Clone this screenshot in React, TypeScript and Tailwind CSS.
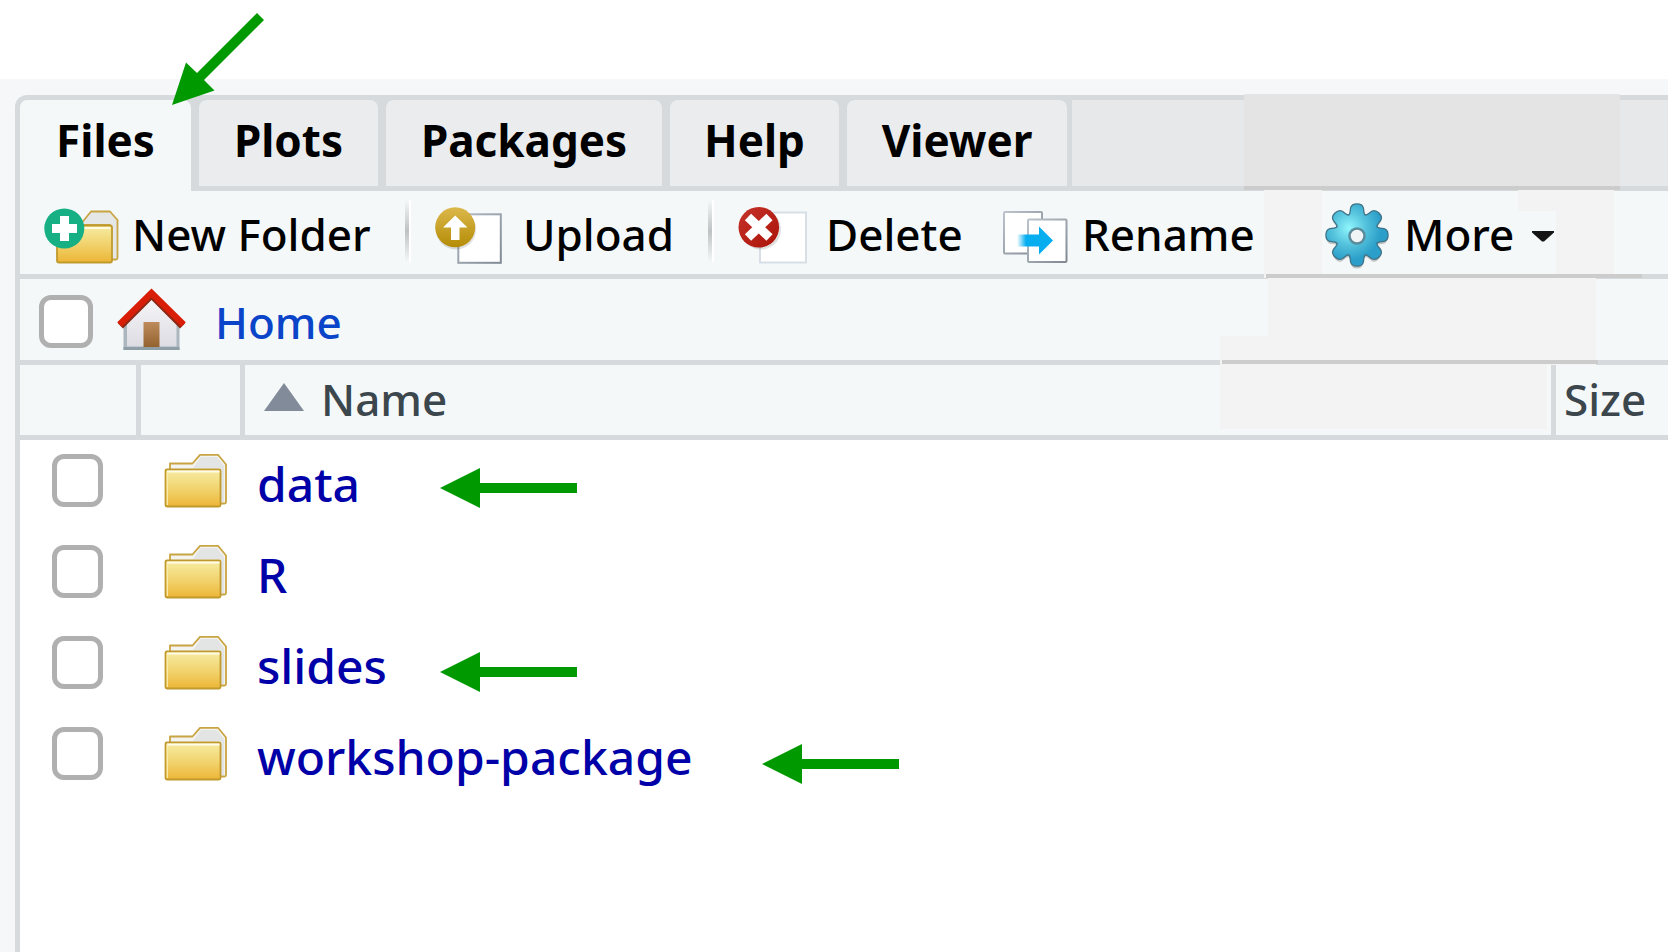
import { useState } from "react";
import type { ReactNode } from "react";
import clsx from "clsx";

type Tab = { name: string; width: string };

const tabs: Tab[] = [
  { name: "Files", width: "w-[171px]" },
  { name: "Plots", width: "w-[179px]" },
  { name: "Packages", width: "w-[276px]" },
  { name: "Help", width: "w-[169px]" },
  { name: "Viewer", width: "w-[220px]" },
];

const folders = ["data", "R", "slides", "workshop-package"];

const NewFolderIcon = () => (
  <svg viewBox="44 206 78 58" className="h-[58px] w-[78px]" aria-hidden="true">
    <defs>
      <linearGradient id="nfFront" x1="0" y1="0" x2="0" y2="1">
        <stop offset="0" stopColor="#f6eda4" />
        <stop offset="0.6" stopColor="#f0cd62" />
        <stop offset="1" stopColor="#ecb535" />
      </linearGradient>
    </defs>
    <path
      d="M80 224 L91 210.500 H110 L117.500 219 V257 Q117.500 258.500 116 258.500 H110 V224 Z"
      fill="#e5e6e6"
      stroke="#c9a443"
      strokeWidth="1.800"
      strokeLinejoin="round"
    />
    <rect x="57" y="224.500" width="55" height="37" rx="2" fill="url(#nfFront)" stroke="#c09a2c" strokeWidth="1.800" />
    <path d="M59 227 H110" stroke="#fffbe0" strokeWidth="2" />
    <circle cx="64.300" cy="227.500" r="20" fill="#17b084" />
    <path d="M52 227.500 H77 M64.500 215 V240" stroke="#fff" strokeWidth="9" />
  </svg>
);

const FolderIcon = () => (
  <svg viewBox="164 453 64 56" className="block h-14 w-16" aria-hidden="true">
    <defs>
      <linearGradient id="rowFront" x1="0" y1="0" x2="0" y2="1">
        <stop offset="0" stopColor="#f6eda4" />
        <stop offset="0.600" stopColor="#f1cf66" />
        <stop offset="1" stopColor="#edb636" />
      </linearGradient>
    </defs>
    <path
      d="M170 470 V463.500 H192.500 L200 454.800 H218 L226 464.500 V502 Q226 503.500 224.500 503.500 H219 V470 Z"
      fill="#f3f3f0"
      stroke="#c9a443"
      strokeWidth="1.800"
      strokeLinejoin="round"
    />
    <path d="M193 468 L201 457 H217 L224 466 V502 H220 V468 Z" fill="#e3e4e4" />
    <rect x="165.500" y="469.500" width="55" height="37" rx="1.500" fill="url(#rowFront)" stroke="#c09a2c" strokeWidth="1.800" />
    <path d="M167 471.500 H219.500" stroke="#fffbe8" strokeWidth="2" />
    <path d="M167.300 472 V505" stroke="#fbeeb0" strokeWidth="1.200" />
  </svg>
);

const UploadIcon = () => (
  <svg viewBox="434 206 70 60" className="h-[60px] w-[70px]" aria-hidden="true">
    <defs>
      <linearGradient id="upFill" x1="0" y1="0" x2="0" y2="1">
        <stop offset="0" stopColor="#dcb84b" />
        <stop offset="1" stopColor="#b48c06" />
      </linearGradient>
      <linearGradient id="pageEdge" x1="0" y1="0" x2="1" y2="1">
        <stop offset="0" stopColor="#b4bcc6" />
        <stop offset="1" stopColor="#808a94" />
      </linearGradient>
    </defs>
    <rect x="458.300" y="214.300" width="42.500" height="48.500" fill="#fff" stroke="url(#pageEdge)" strokeWidth="2" />
    <circle cx="456" cy="229.500" r="20" fill="#000" opacity="0.120" />
    <circle cx="455.200" cy="227.300" r="20" fill="url(#upFill)" />
    <path d="M455.200 215.500 L467.500 227.500 H459.500 V240 H451 V227.500 H443 Z" fill="#fff" />
  </svg>
);

const DeleteIcon = () => (
  <svg viewBox="736 206 72 60" className="h-[60px] w-[72px]" aria-hidden="true">
    <defs>
      <linearGradient id="delFill" x1="0" y1="0" x2="1" y2="1">
        <stop offset="0" stopColor="#c5332a" />
        <stop offset="1" stopColor="#ab1208" />
      </linearGradient>
    </defs>
    <rect x="759" y="212.500" width="46" height="50" fill="#fff" stroke="#d8dee6" strokeWidth="2" />
    <circle cx="760" cy="229.500" r="20" fill="#000" opacity="0.120" />
    <circle cx="757.800" cy="227.300" r="20.300" fill="url(#delFill)" />
    <path d="M747 217 L768.500 237.500 M768.500 217 L747 237.500" stroke="#fff" strokeWidth="9" />
  </svg>
);

const RenameIcon = () => (
  <svg viewBox="1002 209 66 56" className="h-14 w-[66px]" aria-hidden="true">
    <defs>
      <linearGradient id="renEdge" x1="0" y1="0" x2="1" y2="1">
        <stop offset="0" stopColor="#bcc3cb" />
        <stop offset="1" stopColor="#808992" />
      </linearGradient>
      <linearGradient id="renArrow" x1="0" y1="0" x2="1" y2="0">
        <stop offset="0" stopColor="#06aef0" stopOpacity="0" />
        <stop offset="0.250" stopColor="#06aef0" />
      </linearGradient>
    </defs>
    <rect x="1004" y="213" width="38" height="41.500" rx="1" fill="#fff" stroke="url(#renEdge)" strokeWidth="2" />
    <rect x="1028" y="220.500" width="38.500" height="42.500" rx="1" fill="#fff" stroke="url(#renEdge)" strokeWidth="2" />
    <path d="M1017 235.500 H1039 V227.500 L1053 241.500 L1039 255.500 V247.500 H1017 Z" fill="url(#renArrow)" />
  </svg>
);

const gearAngles = [0, 45, 90, 135, 180, 225, 270, 315];

const GearIcon = () => (
  <svg viewBox="-33 -34 66 70" className="h-[70px] w-[66px]" aria-hidden="true">
    <defs>
      <radialGradient id="gearFill" gradientUnits="userSpaceOnUse" cx="-8" cy="-7" r="32">
        <stop offset="0" stopColor="#8ff6fc" />
        <stop offset="0.500" stopColor="#58c5de" />
        <stop offset="1" stopColor="#2b9fc9" />
      </radialGradient>
      <path
        id="tooth"
        d="M-12 -12 L-9.500 -18.500 Q-6.500 -19.500 -6.300 -23 L-5.800 -27 Q-4.800 -30.500 0 -30.500 Q4.800 -30.500 5.800 -27 L6.300 -23 Q6.500 -19.500 9.500 -18.500 L12 -12 Z"
      />
    </defs>
    <g opacity="0.200" transform="translate(0 3)">
      {gearAngles.map((a) => (
        <use key={a} href="#tooth" transform={`rotate(${a})`} />
      ))}
    </g>
    <g stroke="#3f7287" strokeWidth="2.500">
      {gearAngles.map((a) => (
        <use key={a} href="#tooth" transform={`rotate(${a})`} />
      ))}
    </g>
    <clipPath id="gearClip">
      <circle r="19" />
      {gearAngles.map((a) => (
        <use key={a} href="#tooth" transform={`rotate(${a})`} />
      ))}
    </clipPath>
    <rect x="-32" y="-32" width="64" height="64" fill="url(#gearFill)" clipPath="url(#gearClip)" />
    <circle r="7.500" cy="1" fill="#f2f5f6" stroke="#5b8c9c" strokeWidth="2.500" />
  </svg>
);

const HomeIcon = () => (
  <svg viewBox="116 287 71 64" className="h-16 w-[71px]" aria-hidden="true">
    <defs>
      <linearGradient id="wall" x1="0" y1="0" x2="0" y2="1">
        <stop offset="0" stopColor="#f6f6f8" />
        <stop offset="1" stopColor="#dcdce3" />
      </linearGradient>
      <linearGradient id="door" x1="0" y1="0" x2="0" y2="1">
        <stop offset="0" stopColor="#be8c5c" />
        <stop offset="1" stopColor="#92622f" />
      </linearGradient>
    </defs>
    <path d="M123.500 322 L151.500 294 L179.500 322 V349 H123.500 Z" fill="#abb6be" />
    <path d="M127 322 L151.500 298 L176.500 322 V345.500 H127 Z" fill="url(#wall)" />
    <path d="M123.500 347.500 H179.500" stroke="#8f9fa8" strokeWidth="3" />
    <rect x="143.500" y="321" width="16" height="25" fill="url(#door)" />
    <path d="M120.500 325 L151.500 294 L182.500 325" fill="none" stroke="#8d2814" strokeWidth="7" />
    <path d="M119.500 323.500 L151.500 292 L183.500 323.500" fill="none" stroke="#d81e06" strokeWidth="6.500" />
  </svg>
);

const Arrow = ({ className }: { className: string }) => (
  <svg viewBox="0 0 138 40" className={clsx("absolute h-10 w-[138px]", className)} aria-hidden="true">
    <path d="M0 20 L40 0 V15 H137 V25 H40 V40 Z" fill="#009a00" />
  </svg>
);

const Separator = () => (
  <div className="mb-1 h-[62px] w-1.5 shrink-0 border-r-2 border-white bg-linear-to-b from-transparent via-[#bfc2c4] to-transparent" />
);

type ToolProps = { icon: ReactNode; label: string; className: string; iconWidth: string; children?: ReactNode };

const ToolButton = ({ icon, label, className, iconWidth, children }: ToolProps) => (
  <button type="button" className={clsx("flex h-full shrink-0 items-center pt-0.5 whitespace-nowrap", className)}>
    <span className={clsx("flex shrink-0 items-center pt-1", iconWidth)}>{icon}</span>
    {label}
    {children}
  </button>
);

const Checkbox = ({ label, className }: { label: string; className: string }) => (
  <input
    type="checkbox"
    aria-label={label}
    className={clsx(
      "block h-[53px] shrink-0 appearance-none rounded-xl border-[5px] border-[#b0b0b0] bg-white checked:bg-blue-500",
      className
    )}
  />
);

const App = () => {
  const [active, setActive] = useState("Files");

  return (
    <div className="relative flex min-h-screen flex-col overflow-hidden bg-white pt-[79px] font-['Noto_Sans','Open_Sans',sans-serif] text-[44px] leading-[60px] font-medium text-black">
      <div className="flex flex-1 flex-col bg-[#f5f7f9] pt-4 pl-[15px]">
        <main className="flex-1 rounded-tl-xl border-t-[5px] border-l-[5px] border-[#d6dadd] bg-white">
          {/* Tabs */}
          <div className="relative flex h-[91px] rounded-tl-lg bg-[#d6dadd]">
            <div role="tablist" className="flex shrink-0 gap-2">
              {tabs.map((tab) => (
                <button
                  key={tab.name}
                  type="button"
                  role="tab"
                  aria-selected={active === tab.name}
                  onClick={() => setActive(tab.name)}
                  className={clsx(
                    "rounded-t-lg font-bold",
                    tab.width,
                    active === tab.name ? "h-[91px] bg-[#f4f8f9] pb-[11px]" : "h-[86px] bg-[#ebecee] pb-1.5"
                  )}
                >
                  {tab.name}
                </button>
              ))}
            </div>
            <div className="ml-[5px] h-[86px] flex-1 bg-[#e6e8ea]" />
            <div className="absolute -top-1.5 left-[1224px] h-24 w-[376px] border-b-4 border-[#cccccc] bg-[#e4e4e4]" />
          </div>

          {/* Toolbar */}
          <div className="relative flex h-[88px] border-b-[5px] border-[#d6dadd] bg-[#f4f8f9]">
            <div className="absolute -top-px left-[1244px] h-[88px] w-[58px] bg-[#f3f3f3]" />
            <div className="absolute -top-px left-[1498px] h-[21px] w-24 bg-[#f3f3f3]" />
            <div className="absolute top-5 left-[1536px] h-[67px] w-[58px] bg-[#f3f3f3]" />
            <div className="relative flex items-center pl-6">
              <ToolButton icon={<NewFolderIcon />} label="New Folder" iconWidth="w-[88px]" className="w-[361px]" />
              <Separator />
              <ToolButton icon={<UploadIcon />} label="Upload" iconWidth="w-[89px]" className="ml-[23px] w-[274px]" />
              <Separator />
              <ToolButton icon={<DeleteIcon />} label="Delete" iconWidth="w-[89px]" className="ml-[23px] w-[265px]" />
              <ToolButton icon={<RenameIcon />} label="Rename" iconWidth="w-20" className="w-[322px]" />
              <ToolButton icon={<GearIcon />} label="More" iconWidth="w-20" className="w-[230px]">
                <svg viewBox="0 0 22 11" className="mt-1.5 ml-auto h-[11px] w-[22px]" aria-hidden="true">
                  <path d="M0 0 H22 V1.500 L12 10.500 H10 L0 1.500 Z" fill="#151515" />
                </svg>
              </ToolButton>
            </div>
            <div className="absolute top-[83px] left-[1246px] h-1 w-[376px] bg-[#cccccc]" />
          </div>

          {/* Breadcrumb */}
          <div className="relative flex h-[86px] items-center border-b-[5px] border-[#d6dadd] bg-[#f4f8f9] pt-1 pl-[19px]">
            <div className="absolute -top-px left-[1248px] h-[58px] w-[328px] bg-[#f3f3f3]" />
            <div className="absolute top-[57px] left-[1200px] h-8 w-[376px] bg-[#f3f3f3]" />
            <div className="absolute top-[81px] left-[1202px] h-1 w-[376px] bg-[#cccccc]" />
            <Checkbox label="Select all" className="w-[54px]" />
            <span className="mb-1 ml-[23px] shrink-0">
              <HomeIcon />
            </span>
            <a href="#home" className="ml-7 text-[#0a44c8]">
              Home
            </a>
          </div>

          {/* File list */}
          <div className="relative">
            <table className="w-full table-fixed border-separate border-spacing-0 text-left">
              <colgroup>
                <col className="w-[121px]" />
                <col className="w-[104px]" />
                <col />
                <col className="w-[112px]" />
              </colgroup>
              <thead className="bg-[#f4f8f9] text-[#3b464d]">
                <tr className="h-[75px]">
                  <th aria-label="Select" className="border-r-[5px] border-b-[5px] border-[#d6dadd] p-0" />
                  <th aria-label="Type" className="border-r-[5px] border-b-[5px] border-[#d6dadd] p-0" />
                  <th className="relative border-r-[5px] border-b-[5px] border-[#d6dadd] p-0 pb-0.5 pl-[19px] font-medium">
                    <div className="absolute top-0 right-1 h-16 w-[327px] bg-[#f3f3f3]" />
                    <button type="button" className="flex items-center gap-[17px]">
                      <svg viewBox="0 0 40 28" className="mb-1 h-7 w-10" aria-hidden="true">
                        <path d="M20 0 L40 28 H0 Z" fill="#828b99" />
                      </svg>
                      Name
                    </button>
                  </th>
                  <th className="border-b-[5px] border-[#d6dadd] p-0 pb-0.5 pl-2 font-medium">Size</th>
                </tr>
              </thead>
              <tbody className="text-[48px]">
                {folders.map((folder) => (
                  <tr key={folder} className="h-[91px] align-top">
                    <td className="p-0 pt-3.5 pl-8">
                      <Checkbox label={`Select ${folder}`} className="w-[51px]" />
                    </td>
                    <td className="p-0 pt-[13px] pl-[23px]">
                      <FolderIcon />
                    </td>
                    <td className="p-0 pt-3.5 pl-3">
                      <a href={`#${folder}`} className="block w-fit text-[#0000a8]">
                        {folder}
                      </a>
                    </td>
                    <td className="p-0" />
                  </tr>
                ))}
              </tbody>
            </table>
          </div>
        </main>
      </div>

      {/* Pointers */}
      <svg viewBox="170 12 96 96" className="absolute top-3 left-[170px] size-24" aria-hidden="true">
        <path d="M172 105 L186 62.500 L197 73 L257 13 L264 20 L204 80 L214.500 90.500 Z" fill="#009a00" />
      </svg>
      <Arrow className="top-[468px] left-[440px]" />
      <Arrow className="top-[652px] left-[440px]" />
      <Arrow className="top-[744px] left-[762px]" />
    </div>
  );
};

export default App;
